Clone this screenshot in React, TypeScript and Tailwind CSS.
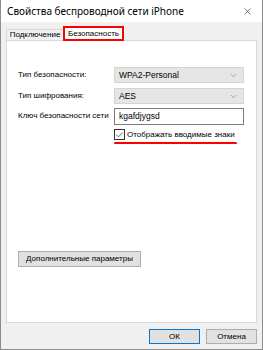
import { ChevronDown, X, Check } from "lucide-react";

const font = { fontFamily: '"Noto Sans", "Open Sans", sans-serif' };
const ui = { fontFamily: '"Liberation Sans", Arial, sans-serif' };

function Select({ value }: { value: string }) {
  return (
    <div className="flex h-[16px] w-[130px] items-center justify-between border border-[#d4d4d4] bg-[#e5e5e5] pl-[4px] pr-[5px] text-[8.5px] text-black">
      <span>{value}</span>
      <ChevronDown size={9} strokeWidth={1.2} className="text-[#555]" />
    </div>
  );
}

export default function App() {
  return (
    <div className="flex h-[350px] w-[263px] flex-col overflow-hidden border-x border-b border-[#8c8c8c] bg-[#f0f0f0] text-black" style={font}>
      {/* title bar */}
      <div className="flex h-[22px] shrink-0 items-center justify-between bg-white pl-[6px] pr-[9px]">
        <span className="text-[10px] leading-none">Свойства беспроводной сети iPhone</span>
        <X size={11} strokeWidth={1.1} />
      </div>

      <div className="flex flex-1 flex-col px-[5px] pt-[4px]" style={ui}>
        {/* tabs */}
        <div className="flex h-[14px] items-end whitespace-nowrap">
          <div className="flex h-[11px] w-[57px] items-center justify-center border-l border-t border-[#d9d9d9] text-[8px] leading-none">
            Подключение
          </div>
          <div className="relative -mb-px flex h-[15px] w-[61px] items-center justify-center border-2 border-[#ff0000] bg-white text-[8px] leading-none">
            Безопасность
          </div>
        </div>

        {/* panel */}
        <div className="flex h-[283px] flex-col whitespace-nowrap border border-[#d9d9d9] bg-white pl-[11px] pt-[23px]">
          <div className="flex h-[22px] items-center">
            <span className="w-[96px] text-[8px]">Тип безопасности:</span>
            <Select value="WPA2-Personal" />
          </div>
          <div className="flex h-[20px] items-center">
            <span className="w-[96px] text-[8px]">Тип шифрования:</span>
            <Select value="AES" />
          </div>
          <div className="flex h-[20px] items-center">
            <span className="w-[96px] text-[8px]">Ключ безопасности сети</span>
            <div className="flex h-[17px] w-[130px] items-center border border-[#7a7a7a] px-[4px] text-[8.5px]">
              kgafdjygsd
            </div>
          </div>
          <div className="ml-[96px] mt-[3px] flex w-[123px] flex-col">
            <div className="flex items-center gap-[2px]">
              <div className="flex h-[11px] w-[11px] shrink-0 items-center justify-center border border-[#333]">
                <Check size={10} strokeWidth={1.6} />
              </div>
              <span className="text-[8px] leading-none">Отображать вводимые знаки</span>
            </div>
            <div className="mt-[2px] h-[2px] w-full rounded-full bg-[#ff0000]" />
          </div>

          <div className="mt-[107px] flex h-[16px] w-[123px] items-center justify-center border border-[#adadad] bg-[#e1e1e1] text-[8px]">
            Дополнительные параметры
          </div>
        </div>

        {/* footer */}
        <div className="flex justify-end gap-[6px] pt-[6px]">
          <div className="flex h-[15px] w-[51px] items-center justify-center border border-[#0078d7] bg-[#e1e1e1] text-[8px]">
            ОК
          </div>
          <div className="flex h-[15px] w-[51px] items-center justify-center border border-[#adadad] bg-[#e1e1e1] text-[8px]">
            Отмена
          </div>
        </div>
      </div>
    </div>
  );
}
